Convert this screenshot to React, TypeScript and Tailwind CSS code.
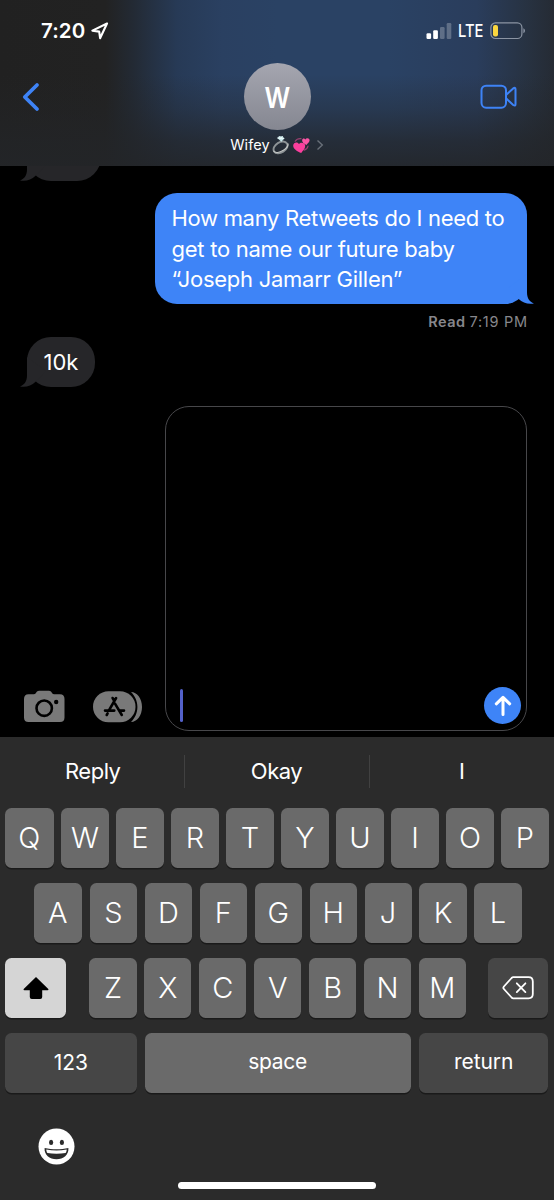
import clsx from 'clsx';

const TOP_ROW = ['Q', 'W', 'E', 'R', 'T', 'Y', 'U', 'I', 'O', 'P'];
const MIDDLE_ROW = ['A', 'S', 'D', 'F', 'G', 'H', 'J', 'K', 'L'];
const BOTTOM_ROW = ['Z', 'X', 'C', 'V', 'B', 'N', 'M'];

const Key = ({ children, className }: { children: React.ReactNode, className?: string }) => (
  <button
    className={clsx(
      'flex h-[60.5px] shrink-0 items-center justify-center rounded-[6.5px] text-white shadow-[0_1.5px_0_#1a1a1a]',
      className
    )}
  >
    {children}
  </button>
);

const LetterKey = ({ letter, wide = false }: { letter: string, wide?: boolean }) => (
  <Key className={clsx('bg-[#6a6a6a] text-[29px] font-[330]', wide ? 'w-[48.5px]' : 'w-[47.1px]')}>{letter}</Key>
);

const LocationArrow = () => (
  <svg width="18" height="18" viewBox="0 0 18 18" fill="none" stroke="#fff" strokeWidth="2.1" strokeLinejoin="round">
    <path d="M16 1.5 L1.4 8.6 L8.2 9.6 L9.1 16.2 Z" />
  </svg>
);

const Signal = () => (
  <svg width="26" height="17" viewBox="0 0 26 17" fill="#fff">
    <rect x="0.5" y="10.3" width="4.6" height="5.7" rx="1.2" />
    <rect x="7.2" y="7.3" width="4.7" height="8.7" rx="1.2" />
    <rect x="14" y="4" width="4.6" height="12" rx="1.2" opacity=".25" />
    <rect x="20.7" y="0" width="4.6" height="16" rx="1.2" opacity=".25" />
  </svg>
);

const Battery = () => (
  <svg width="36" height="18" viewBox="0 0 36 18" fill="none">
    <rect x="0.9" y="0.9" width="31" height="15.6" rx="4.6" stroke="#8b94a3" strokeWidth="1.2" />
    <rect x="3" y="3" width="5" height="11.5" rx="2" fill="#fbd63f" />
    <path d="M33.4 6.2 C35.5 7 35.5 10.4 33.4 11.2 Z" fill="#8b94a3" />
  </svg>
);

const Ring = () => (
  <svg width="18" height="20" viewBox="0 0 19 20" fill="none">
    <ellipse cx="9" cy="12.6" rx="8" ry="5.4" transform="rotate(-32 9 12.6)" stroke="#8d9396" strokeWidth="2" />
    <path d="M1.5 16 C3.5 19.3 8 18 12 15.5 C15 13.6 17.3 10.8 17 8.4" stroke="#c5c8c6" strokeWidth="1.1" />
    <path d="M5.6 2.6 L7.6 .8 L11.2 .8 L13 3.2 L9.8 6.6 Z" fill="#c6e6e9" />
    <path d="M7.6 .8 L9 3.2 L11.2 .8 M5.6 2.6 L9 3.2 L13 3.2" stroke="#f2ffff" strokeWidth=".8" />
  </svg>
);

const Hearts = () => (
  <svg width="17" height="17" viewBox="0 0 17 17">
    <path d="M2.2 4.2 C3.4 2.2 5.6 1.4 8 1.6 M15 9 C14.6 11.2 13 12.6 11.2 13.1" fill="none" stroke="#994071" strokeWidth="1.2" strokeLinecap="round" />
    <path d="M8.2 16 C4.6 14.6 0 12.2 .2 8.3 C.4 5 4.8 4.4 6 7 C7.8 4.7 12.2 5.7 12.2 9 C12.2 11.6 9.8 13.8 8.2 16 Z" fill="#fb3f9d" />
    <path d="M13.4 8 C11.1 7.1 8.8 5.4 9.1 3.1 C9.3 1.3 11.5 .9 12.4 2.4 C13.4 .5 16.6 .8 16.6 3.3 C16.6 5.3 14.6 6.4 13.4 8 Z" fill="#fb55a5" />
  </svg>
);

const Camera = () => (
  <svg width="41" height="33" viewBox="0 0 41 33">
    <path d="M4.5 4.3 H10 C12 4.3 12.4 .8 15 .8 H25 C27.6 .8 28 4.3 30 4.3 H36 C39 4.3 40.5 6 40.5 9 V27.5 C40.5 30.5 39 32 36 32 H4.5 C1.5 32 0 30.5 0 27.5 V9 C0 6 1.5 4.3 4.5 4.3 Z" fill="#797979" />
    <circle cx="20.2" cy="18.2" r="7.7" fill="none" stroke="#000" strokeWidth="2.6" />
    <circle cx="32.2" cy="12" r="2.2" fill="#000" />
  </svg>
);

const AppStore = () => (
  <svg width="50" height="32" viewBox="0 0 50 32">
    <path d="M38 1 C44 1.2 49 7.4 49 15.9 C49 24.5 44 30.8 38 31 C42 27 44.4 22 44.4 16 C44.4 10 42 5 38 1 Z" fill="#797979" />
    <rect x="0" y=".3" width="42.5" height="31" rx="15.5" fill="#797979" />
    <g stroke="#000" strokeWidth="2.6" strokeLinecap="round">
      <path d="M23.1 7 L15.8 19.6 M19.6 7 L21.2 9.8 M22 12.6 L28.8 24 M14.6 22.4 L13.7 24" />
      <path d="M12 19.6 H21.3 M27 19.6 H31" />
    </g>
  </svg>
);

const Grin = () => (
  <svg width="37" height="37" viewBox="0 0 37 37">
    <circle cx="18.5" cy="18.5" r="18" fill="#fff" />
    <ellipse cx="13.1" cy="14.4" rx="2.1" ry="2.6" fill="#2b2b2b" />
    <ellipse cx="23.9" cy="14.4" rx="2.1" ry="2.6" fill="#2b2b2b" />
    <path d="M6.6 19.9 C14 21.6 23 21.6 30.4 19.9 C31 26.5 25.5 31.2 18.5 31.2 C11.5 31.2 6 26.5 6.6 19.9 Z" fill="#2b2b2b" />
    <path d="M8.3 21.4 C15 22.9 22 22.9 28.7 21.4 C28.6 23 28.3 24.2 27.5 25 C22 26 15 26 9.5 25 C8.7 24.2 8.4 23 8.3 21.4 Z" fill="#fff" />
  </svg>
);

// Little hook at the bottom left corner of an incoming bubble
const LeftTail = () => (
  <svg className="absolute bottom-0 -left-[7px]" width="26" height="30" viewBox="0 0 26 30">
    <path d="M7 0 V18.5 C7 24 4.6 27.8 0 29.4 C5.6 30.4 11.5 29 15.3 25 L26 14 Z" fill="#262629" />
  </svg>
);

const RightTail = () => (
  <svg className="absolute -right-[7px] bottom-0" width="26" height="30" viewBox="0 0 26 30">
    <path d="M19 0 V18.5 C19 24 21.4 27.8 26 29.4 C20.4 30.4 14.5 29 10.7 25 L0 14 Z" fill="#3e84f7" />
  </svg>
);

const Header = () => (
  <header className="flex h-[166px] shrink-0 flex-col bg-[#232324] bg-[linear-gradient(to_bottom,transparent_45%,rgba(35,37,40,0.3)_65%,rgba(35,37,40,0.72)_85%,rgba(35,37,40,0.9)_100%),linear-gradient(to_right,#212121_0%,#222222_19%,#232a34_24%,#273a56_32%,#2a4061_40%,#2a4264_50%,#2a4264_70%,#2a3d5c_86%,#27313f_96%,#252b34_100%)]">
    <div className="flex h-[62px] items-center justify-between pr-[28px] pl-[41px]">
      <div className="flex items-center gap-[6px] text-[20.5px] font-semibold text-white">
        <span className="tracking-[0.1px]">7:20</span>
        <LocationArrow />
      </div>
      <div className="flex items-center text-white">
        <Signal />
        <span className="ml-[6px] w-[25.5px] origin-left scale-x-[.84] text-[17.5px] font-medium">LTE</span>
        <span className="ml-[6.5px]"><Battery /></span>
      </div>
    </div>
    <div className="grid grid-cols-3 px-[22px]">
      <button className="flex h-[69px] items-center justify-start">
        <svg width="18" height="30" viewBox="0 0 18 30" fill="none" stroke="#3e83f6" strokeWidth="3.8" strokeLinecap="round" strokeLinejoin="round">
          <path d="M15 3 L2.8 15 L15 27" />
        </svg>
      </button>
      <div className="flex flex-col items-center pt-px">
        <div className="flex size-[67px] items-center justify-center rounded-full bg-linear-to-b from-[#a5a6b0] to-[#858791] text-[28px] font-semibold text-white">
          <span className="scale-x-[.9] pt-[2px]">W</span>
        </div>
        <div className="mt-[4px] flex h-[22px] items-center text-[14.5px] text-white">
          <span className="mr-[2px] tracking-[0.1px]">Wifey</span>
          <Ring />
          <span className="ml-[3px]"><Hearts /></span>
          <svg className="ml-[6px]" width="8" height="12" viewBox="0 0 8 12" fill="none" stroke="#697079" strokeWidth="1.4">
            <path d="M1.5 1.5 L6.3 6 L1.5 10.5" />
          </svg>
        </div>
      </div>
      <button className="flex h-[69px] items-center justify-end pr-[15px]">
        <svg width="37" height="26" viewBox="0 0 37 26" fill="none" stroke="#3e83f6" strokeWidth="2" strokeLinejoin="round">
          <rect x="1.5" y="1.7" width="24.5" height="22" rx="4.6" />
          <path d="M26.3 10.8 L33.2 4.4 C34.8 3.3 35.5 3.7 35.5 5.2 V20.2 C35.5 21.7 34.8 22.1 33.2 21 L26.3 14.6" />
        </svg>
      </button>
    </div>
  </header>
);

const Conversation = () => (
  <main className="flex h-[570.5px] shrink-0 flex-col bg-black">
    <div className="h-[15px] overflow-hidden">
      <div className="relative -mt-[35px] ml-[27px] h-[50px] w-[74px] rounded-[24px] bg-[#262629]">
        <LeftTail />
      </div>
    </div>

    <div className="relative mt-[12px] mr-[27px] h-[111px] w-[372px] self-end rounded-[22px] bg-[#3e84f7] pt-[10px] pl-[16.5px] text-[22px] leading-[30.6px] text-white">
      <p className="whitespace-nowrap tracking-[-0.3px]">How many Retweets do I need to</p>
      <p className="whitespace-nowrap tracking-[-0.26px]">get to name our future baby</p>
      <p className="whitespace-nowrap tracking-[-0.26px]">“Joseph Jamarr Gillen”</p>
      <RightTail />
    </div>

    <div className="mt-[8px] mr-[27px] flex h-[20px] items-center justify-end gap-[4px] text-[14.5px] text-[#87878c]">
      <span className="font-semibold tracking-[0.5px]">Read</span>
      <span className="-mr-[0.7px] tracking-[0.7px]">7:19 PM</span>
    </div>

    <div className="relative mt-[5px] ml-[27px] flex h-[50px] w-[68px] items-center justify-center rounded-[24px] bg-[#262629] text-[22px] text-white">
      10k
      <LeftTail />
    </div>

    <div className="mt-[19px] flex items-end">
      <div className="mb-[8px] ml-[24px] flex w-[140.5px] items-center gap-[28px]">
        <Camera />
        <AppStore />
      </div>
      <div className="flex h-[325px] w-[362.5px] items-end justify-between rounded-[24px] border-[1.5px] border-[#47474a] pr-[5px] pb-[6px] pl-[14.5px]">
        <div className="mb-[2px] h-[33px] w-[3px] rounded-full bg-[#5361c9]" />
        <button className="flex size-[37px] items-center justify-center rounded-full bg-[#3e84f7]">
          <svg width="18" height="22" viewBox="0 0 18 22" fill="none" stroke="#fff" strokeWidth="3" strokeLinecap="round" strokeLinejoin="round">
            <path d="M9 19.5 V2.5 M2.3 8.8 L9 2.3 L15.7 8.8" />
          </svg>
        </button>
      </div>
    </div>
  </main>
);

const Keyboard = () => (
  <section className="flex h-[463.5px] shrink-0 flex-col bg-[#2b2b2b]">
    <div className="grid h-[71px] shrink-0 grid-cols-[183.5px_1fr_184.5px] items-center pb-[2px] text-center text-[22px] tracking-[-0.5px] text-white">
      <span className="pl-[2px]">Reply</span>
      <span className="border-x border-[#414141]">Okay</span>
      <span>I</span>
    </div>

    <div className="flex flex-col gap-[14.5px] pr-[5.5px] pl-[5px]">
      <div className="flex justify-between">
        {TOP_ROW.map((letter, i) => <LetterKey key={letter} letter={letter} wide={i === 0} />)}
      </div>
      <div className="flex justify-between pr-[27px] pl-[28.5px]">
        {MIDDLE_ROW.map((letter, i) => <LetterKey key={letter} letter={letter} wide={i === 0} />)}
      </div>
      <div className="flex justify-between">
        <Key className="w-[61px] bg-[#d5d5d5]">
          <svg width="28" height="24" viewBox="0 0 28 24">
            <path d="M14 1 L26.3 13 Q27 14.3 25.5 14.3 H20.2 V21 Q20.2 23 18.2 23 H9.8 Q7.8 23 7.8 21 V14.3 H2.5 Q1 14.3 1.7 13 Z" fill="#000" />
          </svg>
        </Key>
        <div className="flex gap-[7.8px] pl-[1.4px]">
          {BOTTOM_ROW.map((letter) => <LetterKey key={letter} letter={letter} />)}
        </div>
        <Key className="w-[60.5px] bg-[#464646]">
          <svg width="32" height="24" viewBox="0 0 32 24" fill="none" stroke="#fff" strokeWidth="1.8" strokeLinejoin="round" strokeLinecap="round">
            <path d="M11.2 1.2 H26.5 Q30.8 1.2 30.8 5.5 V18 Q30.8 22.3 26.5 22.3 H11.2 Q10.4 22.3 9.6 21.5 L1.9 13 Q.8 11.8 1.9 10.5 L9.6 2 Q10.4 1.2 11.2 1.2 Z" />
            <path d="M14.8 7.3 L23.4 16.1 M23.4 7.3 L14.8 16.1" />
          </svg>
        </Key>
      </div>
      <div className="flex justify-between text-[21px] tracking-[-0.1px]">
        <Key className="w-[131.5px] bg-[#464646]">123</Key>
        <Key className="w-[266.3px] bg-[#6a6a6a]"><span className="-mt-[3px] tracking-[-0.3px]">space</span></Key>
        <Key className="w-[129.7px] bg-[#464646]"><span className="-mt-[3px]">return</span></Key>
      </div>
    </div>

    <div className="mt-[35px] pl-[38px]">
      <Grin />
    </div>
    <div className="mt-[17px] ml-[178px] h-[7px] w-[198px] rounded-full bg-white" />
  </section>
);

export default function App() {
  return (
    <div className="flex h-[1200px] w-[554px] flex-col overflow-hidden bg-black font-['Inter',sans-serif]">
      <Header />
      <Conversation />
      <Keyboard />
    </div>
  );
}
